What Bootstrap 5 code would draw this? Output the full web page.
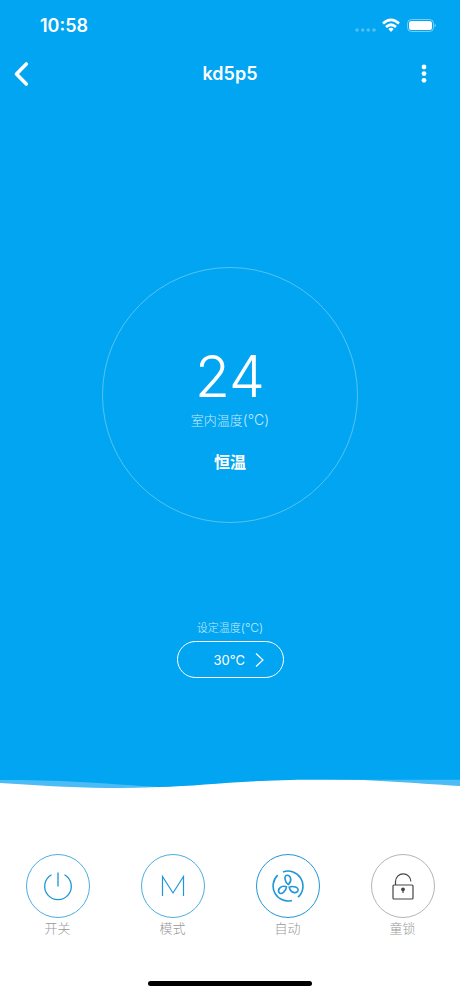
<!DOCTYPE html>
<html lang="zh-CN">
<head>
<meta charset="utf-8">
<meta name="viewport" content="width=device-width, initial-scale=1">
<title>kd5p5</title>
<link rel="stylesheet" href="https://cdn.jsdelivr.net/npm/bootstrap@5.3.0/dist/css/bootstrap.min.css">
<style>
  :root { --sky: #01a5f1; --line: #1f97d6; }
  body { font-family: Inter, "Noto Sans CJK SC", sans-serif; }
  .panel { background: var(--sky); }
  .status { height: 50px; padding: 2px 24px 0 40px; }
  .clock { font-size: 18px; line-height: 24px; }
  .topbar { height: 48px; padding: 0 12px; }
  .topbar .side { width: 48px; height: 48px; }
  .topbar h1 { font-size: 18px; line-height: 24px; }
  .dial { width: 256px; height: 256px; border: 1px solid rgba(255,255,255,.32); padding-top: 79px; margin-top: 169px; }
  .degrees { font-size: 57px; line-height: 60px; font-weight: 300; }
  .caption { font-size: 13px; line-height: 20px; font-weight: 300; color: #c4eafc; margin-top: 3px; }
  .caption span { font-size: 14px; }
  .state { font-size: 16px; line-height: 24px; margin-top: 20px; }
  .target { margin-top: 95px; padding-bottom: 101px; }
  .target label { font-size: 11px; line-height: 20px; font-weight: 300; color: #c4eafc; }
  .target label span { font-size: 12px; }
  .pill { width: 107px; height: 37px; margin-top: 3px; border: 1px solid #fff; font-size: 13px; line-height: 20px; padding: 0 18px 0 36px; }
  .wave { height: 10px; }
  .controls { padding-top: 65px; }
  .knob { color: var(--line); }
  .ring { width: 64px; height: 64px; border: 1px solid #4caee0; }
  .ring-on { border-color: #1f97d6; }
  .ring-off { border-color: #b5b5b5; color: #444; }
  .knob-text { font-size: 13px; line-height: 20px; font-weight: 300; color: #999; }
  .home-bar { width: 164px; height: 5px; margin-bottom: 10px; }
</style>
</head>
<body class="min-vh-100 d-flex flex-column bg-white">
<main class="panel text-white d-flex flex-column align-items-center">
  <div class="status w-100 d-flex align-items-center justify-content-between">
    <span class="clock fw-semibold">10:58</span>
    <svg width="81" height="16" viewBox="0 0 81 16" fill="#fff" aria-hidden="true">
      <g opacity=".3"><circle cx="2" cy="12" r="1.800"/><circle cx="7.700" cy="12" r="1.800"/><circle cx="13.300" cy="12" r="1.800"/><circle cx="19" cy="12" r="1.800"/></g>
      <g fill="none" stroke="#fff" stroke-width="2.700"><path d="M28 5.600Q36 -1.700 44 5.600"/><path d="M31 9Q36 4.500 41 9"/></g>
      <path d="M33.300 11Q36 8.600 38.700 11L36 14Z"/>
      <rect x="52.500" y="1.500" width="26" height="12" rx="4" fill="none" stroke="#fff" stroke-opacity=".45"/>
      <rect x="54" y="3" width="23" height="9" rx="2.500"/>
      <path d="M79.600 5.500Q82 7.500 79.600 9.500Z" opacity=".5"/>
    </svg>
  </div>
  <header class="topbar w-100 d-flex align-items-center justify-content-between">
    <button type="button" class="side btn border-0 p-0 d-flex align-items-center" aria-label="返回">
      <svg width="18" height="26" viewBox="0 0 18 26" fill="none" stroke="#fff" stroke-width="3.600" stroke-linecap="round" stroke-linejoin="round"><path d="M14.300 3L4.500 13L14.300 23"/></svg>
    </button>
    <h1 class="m-0 fw-semibold">kd5p5</h1>
    <button type="button" class="side btn border-0 p-0 d-flex align-items-center justify-content-center" aria-label="更多">
      <svg width="6" height="20" viewBox="0 0 6 20" fill="#fff"><circle cx="3" cy="3" r="2.400"/><circle cx="3" cy="9.600" r="2.400"/><circle cx="3" cy="16.300" r="2.400"/></svg>
    </button>
  </header>
  <section class="dial rounded-circle text-center">
    <div class="degrees">24</div>
    <div class="caption">室内温度<span>(°C)</span></div>
    <div class="state fw-bold">恒温</div>
  </section>
  <section class="target d-flex flex-column align-items-center">
    <label for="set-temp">设定温度<span>(°C)</span></label>
    <button id="set-temp" type="button" class="pill btn rounded-pill text-white d-flex align-items-center justify-content-between">
      <span>30°C</span>
      <svg width="10" height="16" viewBox="0 0 10 16" fill="none" stroke="#fff" stroke-width="1.200"><path d="M1 1.500L8 8L1 14.500"/></svg>
    </button>
  </section>
</main>
<svg class="wave w-100 d-block" viewBox="0 0 460 10" preserveAspectRatio="none" aria-hidden="true">
  <path d="M0 0V4C45 7 85 9 120 9C180 9 235 0 315 0C370 0 410 4 460 7V0Z" fill="#4cbcf4"/>
  <path d="M0 0V1C65 .500 110 5 158 8C205 7 240 .800 315 .800H460V0Z" fill="#01a5f1"/>
</svg>
<nav class="controls container-fluid px-0" aria-label="控制">
  <div class="row g-0">
    <div class="col-3 d-flex justify-content-center">
      <button type="button" class="knob btn border-0 p-0 d-flex flex-column align-items-center">
        <span class="ring rounded-circle d-flex align-items-center justify-content-center">
          <svg width="32" height="32" viewBox="0 0 32 32" fill="none" stroke="currentColor" stroke-width="1.300"><path d="M9.500 4.700A13.300 13.300 0 1 0 22.500 4.700"/><path d="M16 2.500V16.500" stroke="#4caee0" stroke-width="1.700"/></svg>
        </span>
        <span class="knob-text">开关</span>
      </button>
    </div>
    <div class="col-3 d-flex justify-content-center">
      <button type="button" class="knob btn border-0 p-0 d-flex flex-column align-items-center">
        <span class="ring rounded-circle d-flex align-items-center justify-content-center">
          <svg width="24" height="24" viewBox="0 0 24 24" fill="none" stroke="currentColor" stroke-width="1.200" aria-hidden="true"><path d="M1.500 22V2.500L12 19L22.500 2.500V22"/></svg>
        </span>
        <span class="knob-text">模式</span>
      </button>
    </div>
    <div class="col-3 d-flex justify-content-center">
      <button type="button" class="knob btn border-0 p-0 d-flex flex-column align-items-center">
        <span class="ring ring-on rounded-circle d-flex align-items-center justify-content-center">
          <svg width="32" height="32" viewBox="0 0 32 32" fill="none" stroke="currentColor" stroke-width="1.600">
            <path d="M11 1.900A15 15 0 0 1 26 27.200"/><path d="M20 30.500A15 15 0 0 1 5.700 5.200"/>
            <path d="M16.300 14.600C12.800 12.500 11.500 5.500 15 5.300C18.500 5.200 20.700 10.500 16.300 14.600Z"/>
            <path d="M16.300 14.600C12.800 12.500 11.500 5.500 15 5.300C18.500 5.200 20.700 10.500 16.300 14.600Z" transform="rotate(120 16 16.200)"/>
            <path d="M16.300 14.600C12.800 12.500 11.500 5.500 15 5.300C18.500 5.200 20.700 10.500 16.300 14.600Z" transform="rotate(240 16 16.200)"/>
          </svg>
        </span>
        <span class="knob-text">自动</span>
      </button>
    </div>
    <div class="col-3 d-flex justify-content-center">
      <button type="button" class="knob btn border-0 p-0 d-flex flex-column align-items-center">
        <span class="ring ring-off rounded-circle d-flex align-items-center justify-content-center">
          <svg width="22" height="28" viewBox="0 0 22 28" fill="none" stroke="currentColor" stroke-width="1.200"><rect x="1" y="13" width="20" height="14" rx="1"/><path d="M3.500 13V9.500A7.700 7.700 0 0 1 18.900 9.500"/><path d="M11 17V21"/><circle cx="11" cy="17.300" r="1.900" fill="currentColor" stroke="none"/></svg>
        </span>
        <span class="knob-text">童锁</span>
      </button>
    </div>
  </div>
</nav>
<div class="home-bar rounded-pill bg-black mt-auto mx-auto"></div>
<script src="https://cdn.jsdelivr.net/npm/bootstrap@5.3.0/dist/js/bootstrap.bundle.min.js"></script>
</body>
</html>
